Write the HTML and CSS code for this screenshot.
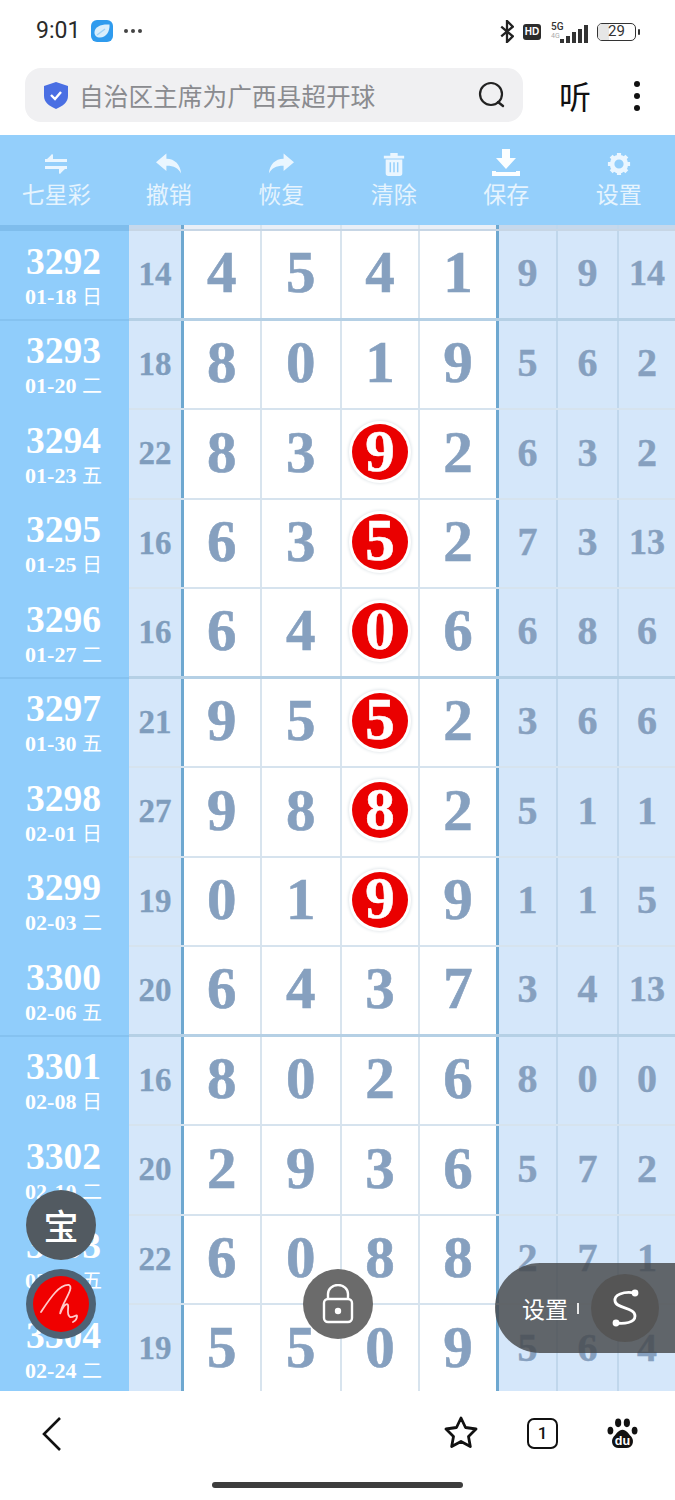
FILE: index.html
```html
<!DOCTYPE html>
<html lang="zh">
<head>
<meta charset="utf-8">
<title>七星彩</title>
<link rel="stylesheet" href="styles.css">
</head>
<body>
<div class="page">
  <div class="status">
    <div class="status-left">
      <span class="time">9:01</span>
      <svg class="app" viewBox="0 0 22 22"><rect width="22" height="22" rx="6" fill="#2f9bee"/><path d="M3.500 12C4 6.500 10 4 18.500 4.500c.5 7-3.500 13-9.500 13-3.500 0-5.800-2-5.500-5.500z" fill="#d9eefc"/><path d="M6 15l8-6" stroke="#9fd2f6" stroke-width="1.400"/></svg>
      <span class="more"><i></i><i></i><i></i></span>
    </div>
    <div class="status-right">
      <svg class="bt" viewBox="0 0 14 24"><path d="M1 7l12 10-6 6V1l6 6L1 17" fill="none" stroke="#222" stroke-width="2.400"/></svg>
      <span class="hd">HD</span>
      <span class="signal">
        <span class="net"><b>5G</b><em>4G</em></span>
        <span class="bars"><i class="b1"></i><i class="b2"></i><i class="b3"></i><i class="b4"></i><i class="b5"></i></span>
      </span>
      <span class="battery"><span class="level"></span><span class="pct">29</span></span>
      <span class="nub"></span>
    </div>
  </div>

  <div class="navbar">
    <div class="search">
      <svg class="shield" viewBox="0 0 24 27"><path d="M12 0l12 4v10c0 6-5 10-12 13C5 24 0 20 0 14V4z" fill="#4a6fe3"/><path d="M7 13l4 4 6-7" fill="none" stroke="#fff" stroke-width="2.400"/></svg>
      <span class="query">自治区主席为广西县超开球</span>
      <svg class="lens" viewBox="0 0 28 28"><circle cx="13" cy="13" r="11" fill="none" stroke="#222" stroke-width="2.200"/><path d="M20 21l5 4" stroke="#222" stroke-width="2.400" stroke-linecap="round"/></svg>
    </div>
    <span class="listen">听</span>
    <span class="kebab"><i></i><i></i><i></i></span>
  </div>

  <div class="toolbar">
    <div class="tool">
      <svg viewBox="0 0 26 24"><path d="M2 7h22v3H2zM10 2v5H4zM2 14h22v3H2zM16 17v5l6-5z" fill="#eaf6ff"/><path d="M9 2L2 10h8zM17 22l7-8h-8z" fill="#eaf6ff"/></svg>
      <span>七星彩</span>
    </div>
    <div class="tool">
      <svg viewBox="0 0 30 24"><path d="M0 10L12 0v6c10 0 16 7 17 17-3-6-8-9-17-9v6z" fill="#eaf6ff"/></svg>
      <span>撤销</span>
    </div>
    <div class="tool">
      <svg viewBox="0 0 30 24"><path d="M30 10L18 0v6C8 6 2 13 1 23c3-6 8-9 17-9v6z" fill="#eaf6ff"/></svg>
      <span>恢复</span>
    </div>
    <div class="tool">
      <svg viewBox="0 0 24 26"><path d="M1 4h7V1h8v3h7v3H1zM3 8h18v15a3 3 0 0 1-3 3H6a3 3 0 0 1-3-3z" fill="#eaf6ff"/><path d="M8 11v11M12 11v11M16 11v11" stroke="#94cffb" stroke-width="1.600"/></svg>
      <span>清除</span>
    </div>
    <div class="tool">
      <svg class="tall" viewBox="0 0 28 28"><path d="M10 0h8v9h6L14 20 4 9h6zM0 22h4v1h20v-1h4v5H0z" fill="#fbfeff"/></svg>
      <span>保存</span>
    </div>
    <div class="tool">
      <svg viewBox="0 0 26 26"><circle cx="13" cy="13" r="7.500" fill="none" stroke="#eaf6ff" stroke-width="5"/><path d="M13 1v24M1 13h24M4.500 4.500l17 17M21.500 4.500l-17 17" stroke="#eaf6ff" stroke-width="4.500" stroke-dasharray="4.500 15 4.500"/></svg>
      <span>设置</span>
    </div>
  </div>

  <div class="table">
    <div class="row strip"><div class="c-id"></div><div class="c-sum"></div><div class="c-main"></div><div class="c-main"></div><div class="c-main"></div><div class="c-main last"></div><div class="c-side"></div><div class="c-side"></div><div class="c-side"></div></div>

    <div class="row major"><div class="c-id"><b>3292</b><small>01-18 <u>日</u></small></div><div class="c-sum">14</div><div class="c-main">4</div><div class="c-main">5</div><div class="c-main">4</div><div class="c-main last">1</div><div class="c-side">9</div><div class="c-side">9</div><div class="c-side two">14</div></div>
    <div class="row"><div class="c-id"><b>3293</b><small>01-20 <u>二</u></small></div><div class="c-sum">18</div><div class="c-main">8</div><div class="c-main">0</div><div class="c-main">1</div><div class="c-main last">9</div><div class="c-side">5</div><div class="c-side">6</div><div class="c-side">2</div></div>
    <div class="row"><div class="c-id"><b>3294</b><small>01-23 <u>五</u></small></div><div class="c-sum">22</div><div class="c-main">8</div><div class="c-main">3</div><div class="c-main"><span class="ball">9</span></div><div class="c-main last">2</div><div class="c-side">6</div><div class="c-side">3</div><div class="c-side">2</div></div>
    <div class="row"><div class="c-id"><b>3295</b><small>01-25 <u>日</u></small></div><div class="c-sum">16</div><div class="c-main">6</div><div class="c-main">3</div><div class="c-main"><span class="ball">5</span></div><div class="c-main last">2</div><div class="c-side">7</div><div class="c-side">3</div><div class="c-side two">13</div></div>
    <div class="row major"><div class="c-id"><b>3296</b><small>01-27 <u>二</u></small></div><div class="c-sum">16</div><div class="c-main">6</div><div class="c-main">4</div><div class="c-main"><span class="ball">0</span></div><div class="c-main last">6</div><div class="c-side">6</div><div class="c-side">8</div><div class="c-side">6</div></div>
    <div class="row"><div class="c-id"><b>3297</b><small>01-30 <u>五</u></small></div><div class="c-sum">21</div><div class="c-main">9</div><div class="c-main">5</div><div class="c-main"><span class="ball">5</span></div><div class="c-main last">2</div><div class="c-side">3</div><div class="c-side">6</div><div class="c-side">6</div></div>
    <div class="row"><div class="c-id"><b>3298</b><small>02-01 <u>日</u></small></div><div class="c-sum">27</div><div class="c-main">9</div><div class="c-main">8</div><div class="c-main"><span class="ball">8</span></div><div class="c-main last">2</div><div class="c-side">5</div><div class="c-side">1</div><div class="c-side">1</div></div>
    <div class="row"><div class="c-id"><b>3299</b><small>02-03 <u>二</u></small></div><div class="c-sum">19</div><div class="c-main">0</div><div class="c-main">1</div><div class="c-main"><span class="ball">9</span></div><div class="c-main last">9</div><div class="c-side">1</div><div class="c-side">1</div><div class="c-side">5</div></div>
    <div class="row major"><div class="c-id"><b>3300</b><small>02-06 <u>五</u></small></div><div class="c-sum">20</div><div class="c-main">6</div><div class="c-main">4</div><div class="c-main">3</div><div class="c-main last">7</div><div class="c-side">3</div><div class="c-side">4</div><div class="c-side two">13</div></div>
    <div class="row"><div class="c-id"><b>3301</b><small>02-08 <u>日</u></small></div><div class="c-sum">16</div><div class="c-main">8</div><div class="c-main">0</div><div class="c-main">2</div><div class="c-main last">6</div><div class="c-side">8</div><div class="c-side">0</div><div class="c-side">0</div></div>
    <div class="row"><div class="c-id"><b>3302</b><small>02-10 <u>二</u></small></div><div class="c-sum">20</div><div class="c-main">2</div><div class="c-main">9</div><div class="c-main">3</div><div class="c-main last">6</div><div class="c-side">5</div><div class="c-side">7</div><div class="c-side">2</div></div>
    <div class="row"><div class="c-id"><b>3303</b><small>02-13 <u>五</u></small></div><div class="c-sum">22</div><div class="c-main">6</div><div class="c-main">0</div><div class="c-main">8</div><div class="c-main last">8</div><div class="c-side">2</div><div class="c-side">7</div><div class="c-side">1</div></div>
    <div class="row"><div class="c-id"><b>3304</b><small>02-24 <u>二</u></small></div><div class="c-sum">19</div><div class="c-main">5</div><div class="c-main">5</div><div class="c-main">0</div><div class="c-main last">9</div><div class="c-side">5</div><div class="c-side">6</div><div class="c-side">4</div></div>
  </div>

  <div class="bottom">
    <svg class="back" viewBox="0 0 20 34"><path d="M18 1L2 17l16 16" fill="none" stroke="#111" stroke-width="2.600"/></svg>
    <svg class="star" viewBox="0 0 34 32"><path d="M17 2l4.500 9.500 10.500 1.500-7.500 7.500 1.800 10L17 25.500 7.700 30.500l1.800-10L2 13l10.500-1.500z" fill="none" stroke="#111" stroke-width="2.800" stroke-linejoin="round"/></svg>
    <span class="tabs">1</span>
    <svg class="paw" viewBox="0 0 32 32"><ellipse cx="3.500" cy="13" rx="3" ry="4" fill="#111"/><ellipse cx="11.500" cy="5" rx="3.200" ry="4.500" fill="#111"/><ellipse cx="20.500" cy="5" rx="3.200" ry="4.500" fill="#111"/><ellipse cx="28.500" cy="13" rx="3" ry="4" fill="#111"/><path d="M16 12c4 0 6 4 9 7 4 5 1 12-5 12h-8C6 31 3 24 7 19c3-3 5-7 9-7z" fill="#111"/><text class="du" x="16" y="28" text-anchor="middle">du</text></svg>
  </div>
  <div class="home"></div>

  <div class="fab fab-bao">宝</div>
  <div class="fab fab-sign">
    <svg viewBox="0 0 56 56"><circle cx="28" cy="28" r="28" fill="#f00000"/><path d="M8 36C16 24 26 8 36 9c6 3-8 19-9 29 2-6 6-12 8-9 1 4-2 9 2 12 3 1 7-3 7-1 0 3-2 5-4 6" fill="none" stroke="#ffc9c9" stroke-width="1.800" stroke-linecap="round"/></svg>
  </div>
  <div class="fab fab-lock">
    <svg viewBox="0 0 32 40"><path d="M6 16V10a10 9 0 0 1 20 0v6" fill="none" stroke="#fff" stroke-width="2.400"/><rect x="2" y="15" width="28" height="23" rx="4" fill="none" stroke="#fff" stroke-width="2.400"/><circle cx="16" cy="27" r="3.200" fill="#fff"/></svg>
  </div>
  <div class="pill">
    <span class="pill-label">设置</span>
    <span class="pill-bar"></span>
    <span class="pill-s">
      <svg viewBox="0 0 28 38"><path d="M24 4C12 2 3 6 4 12c1 8 20 6 20 15 0 7-11 8-19 7" fill="none" stroke="#fff" stroke-width="2.800"/><circle cx="24" cy="4" r="3.400" fill="#fff"/><circle cx="5" cy="34" r="3.400" fill="#fff"/></svg>
    </span>
  </div>
</div>
</body>
</html>
```

FILE: styles.css
```css
* { box-sizing: border-box; }
html, body { margin: 0; padding: 0; background: #fff; }
.page {
  position: relative;
  width: 675px;
  height: 1500px;
  overflow: hidden;
  display: flex;
  flex-direction: column;
  font-family: "Noto Sans CJK SC", "Noto Sans", sans-serif;
}

/* status bar */
.status {
  height: 66px;
  flex: none;
  display: flex;
  justify-content: space-between;
  align-items: flex-start;
  padding: 20px 35px 0 36px;
}
.status-left { display: flex; align-items: center; height: 22px; }
.time { font: 400 23px/22px Roboto, sans-serif; color: #2a2a2a; width: 55px; }
.app { width: 22px; height: 22px; }
.more { display: flex; gap: 3px; margin-left: 11px; }
.more i { width: 4px; height: 4px; border-radius: 50%; background: #444; }
.status-right { display: flex; align-items: center; height: 23px; }
.bt { width: 14px; height: 23px; }
.hd {
  width: 18px; height: 16px; margin-left: 9px;
  background: #2c2c2c; color: #fff; border-radius: 3px;
  font: 700 10px/16px "Liberation Sans", sans-serif; text-align: center;
}
.signal { position: relative; width: 39px; height: 23px; margin-left: 8px; display: block; }
.net { position: absolute; left: 2px; top: 2px; display: flex; flex-direction: column; }
.net b { font: 500 10px/10px Roboto, sans-serif; color: #333; }
.net em { font: 400 7px/8px Roboto, sans-serif; color: #aaa; }
.bars { position: absolute; right: 0; bottom: 0; display: flex; align-items: flex-end; gap: 2px; }
.bars i { width: 4px; background: #333; display: block; }
.b1 { height: 4px; } .b2 { height: 7px; } .b3 { height: 11px; } .b4 { height: 14px; } .b5 { height: 18px; }
.battery {
  position: relative; width: 39px; height: 18px; margin-left: 9px;
  border: 1.5px solid #333; border-radius: 5px; overflow: hidden;
}
.level { position: absolute; left: 0; top: 0; bottom: 0; width: 11px; background: #e6e6e6; }
.pct { position: relative; display: block; text-align: center; font: 400 15px/15px Roboto, sans-serif; color: #333; }
.nub { width: 2px; height: 6px; margin-left: 2px; background: #333; border-radius: 1px; }

/* address bar */
.navbar { height: 69px; flex: none; display: flex; align-items: flex-start; padding: 2px 0 0 25px; }
.search {
  width: 498px; height: 54px; background: #f0f0f2; border-radius: 16px;
  display: flex; align-items: center; padding: 0 17px 0 19px;
}
.shield { width: 24px; height: 27px; flex: none; }
.query { margin-left: 11px; font-size: 24.7px; line-height: 30px; color: #8a8b8f; white-space: nowrap; flex: 1; }
.lens { width: 28px; height: 28px; flex: none; }
.listen { margin: 9px 0 0 36px; font-size: 32px; line-height: 36px; color: #111; }
.kebab { display: flex; flex-direction: column; gap: 6px; margin: 13px 0 0 43px; }
.kebab i { width: 6px; height: 6px; border-radius: 50%; background: #111; }

/* toolbar */
.toolbar {
  height: 90px; flex: none; background: #94cffb;
  display: grid; grid-template-columns: repeat(6, 1fr);
}
.tool { display: flex; flex-direction: column; align-items: center; padding-top: 17px; }
.tool svg { width: 26px; height: 24px; flex: none; }
.tool svg.tall { width: 28px; height: 28px; margin-top: -3px; margin-bottom: -1px; }
.tool span { font-size: 23px; line-height: 30px; margin-top: 2px; color: #e6f4fe; }

/* table */
.table {
  flex: none; height: 1166px; overflow: hidden;
  background: #fff;
  font-family: "Liberation Serif", serif; font-weight: 700;
}
.row {
  height: 89.5px;
  display: grid;
  grid-template-columns: 129px 55px 77.5px 80.5px 78px 79px 59px 61px 56px;
  border-bottom: 2px solid #d6e3ee;
}
.row.major { border-bottom: 3px solid #b5d0e5; }
.row.strip { height: 6px; border-bottom: 2px solid #c7d6e5; }
.row > div { display: flex; align-items: center; justify-content: center; }
.c-id {
  flex-direction: column;
  background: #90cdfb; color: #fff;
  margin-bottom: -2px;
  padding: 8px 2px 0 0;
}
.major .c-id { margin-bottom: -3px; box-shadow: inset 0 -2px 0 #85c2f0; }
.strip .c-id { background: #7fbdec; padding: 0; }
.c-id b { font-size: 37.5px; line-height: 37px; margin-top: -6px; }
.c-id small { font-size: 22px; line-height: 28px; margin-top: 2px; white-space: nowrap; }
.c-id u { text-decoration: none; font-family: "Noto Sans CJK SC", sans-serif; font-weight: 400; font-size: 20px; }
.c-sum {
  background: #d5e7fa; color: #7f9dbd; font-size: 33px;
  border-right: 3px solid #6ea8d0;
  -webkit-text-stroke: 0.3px #7f9dbd;
}
.strip .c-sum { background: #c5d8ec; }
.c-main {
  color: #86a0bf; font-size: 59px;
  border-right: 2px solid #d8e4ee;
  padding-bottom: 3px;
  -webkit-text-stroke: 0.6px #86a0bf;
}
.c-main.last { border-right: 3px solid #6ea8d0; }
.strip .c-main { background: #e9eff7; padding: 0; }
.c-side {
  background: #d5e7fa; color: #86a0bf; font-size: 40px;
  border-right: 2px solid #c0d7ec; padding-bottom: 3px;
  -webkit-text-stroke: 0.4px #86a0bf;
}
.c-side:last-child { border-right: 0; }
.strip .c-side { background: #c5d8ec; padding: 0; }
.c-side.two { font-size: 36px; }
.ball {
  width: 56px; height: 56px; border-radius: 50%;
  background: #ea0000; color: #fff;
  display: flex; align-items: center; justify-content: center;
  box-shadow: 0 0 0 3px #fff, 0 0 3px 4px #e4e9ec;
  padding-bottom: 2px;
  -webkit-text-stroke: 0.6px #fff;
}

/* bottom bar */
.bottom { position: relative; height: 110px; flex: none; background: #fff; }
.back { position: absolute; left: 42px; top: 26px; width: 20px; height: 34px; }
.star { position: absolute; left: 444px; top: 25px; width: 34px; height: 32px; }
.tabs {
  position: absolute; left: 527px; top: 27px; width: 31px; height: 31px;
  border: 2.5px solid #111; border-radius: 7px;
  font: 500 17px/26px Roboto, sans-serif; text-align: center; color: #111;
}
.paw { position: absolute; left: 607px; top: 27px; width: 31px; height: 31px; }
.du { font: 700 13px "Liberation Sans", sans-serif; fill: #fff; }
.home { position: absolute; left: 212px; top: 1482px; width: 251px; height: 6px; background: #3d3d3d; border-radius: 3px; }

/* floating buttons */
.fab {
  position: absolute; width: 70px; height: 70px; border-radius: 50%;
  display: flex; align-items: center; justify-content: center;
}
.fab-bao { left: 26px; top: 1190px; background: #525a61; color: #fff; font-size: 35px; line-height: 70px; font-weight: 500; }
.fab-sign { left: 26px; top: 1269px; background: #4d6274; }
.fab-sign svg { width: 56px; height: 56px; }
.fab-lock { left: 303px; top: 1269px; background: #6b6b6b; }
.fab-lock svg { width: 32px; height: 40px; }
.pill {
  position: absolute; left: 495px; top: 1263px; width: 180px; height: 90px;
  border-radius: 45px 0 0 45px; background: rgba(70, 72, 75, 0.82);
  display: flex; align-items: center; padding-left: 27px;
}
.pill-label { font-size: 23px; line-height: 30px; color: #fff; }
.pill-bar { width: 2px; height: 11px; background: #e8e8e8; margin-left: 9px; }
.pill-s {
  width: 68px; height: 68px; margin-left: 12px; border-radius: 50%; background: #555;
  display: flex; align-items: center; justify-content: center;
}
.pill-s svg { width: 28px; height: 38px; }
```
